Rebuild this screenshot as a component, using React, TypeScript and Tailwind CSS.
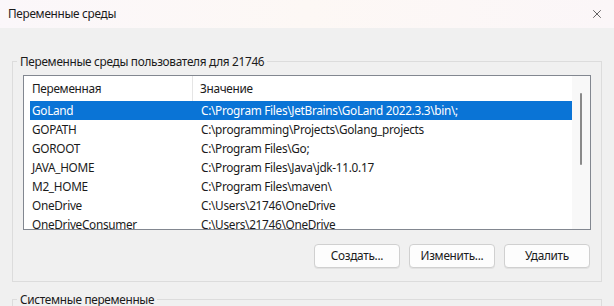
import { X } from 'lucide-react'

const ROWS = [
  ['GoLand', 'C:\\Program Files\\JetBrains\\GoLand 2022.3.3\\bin\\;'],
  ['GOPATH', 'C:\\programming\\Projects\\Golang_projects'],
  ['GOROOT', 'C:\\Program Files\\Go;'],
  ['JAVA_HOME', 'C:\\Program Files\\Java\\jdk-11.0.17'],
  ['M2_HOME', 'C:\\Program Files\\maven\\'],
  ['OneDrive', 'C:\\Users\\21746\\OneDrive'],
  ['OneDriveConsumer', 'C:\\Users\\21746\\OneDrive'],
]

const BTN = 'w-[86px] h-[24px] rounded-[4px] border border-[#d0d0d0] bg-[#fdfdfd] text-[#1b1b1b] shadow-[0_1px_0_#e2e2e2]'

export default function App() {
  return (
    <div className="w-[614px] h-[306px] overflow-hidden bg-[#f0f0f0] text-[#1b1b1b] font-['Noto_Sans',sans-serif] text-[11.8px] tracking-[-0.3px]">
      <div className="h-[28px] flex items-center justify-between pl-[8px] pr-[10px] bg-gradient-to-r from-[#fbf7fa] via-[#fdf8f5] to-[#fbf6f8]">
        <span>Переменные среды</span>
        <X size={14} strokeWidth={1.2} className="text-[#222]" />
      </div>

      <div className="px-[12px] pt-[25px]">
        <fieldset className="border border-[#dcdcdc] pl-[10px] pr-[10px] pb-[13px] pt-[6px]">
          <legend className="-ml-[6px] px-[3px] leading-[16px]">Переменные среды пользователя для 21746</legend>

          <div className="h-[155px] border border-[#828790] bg-white flex">
            <div className="flex-1 flex flex-col min-w-0">
              <div className="h-[25px] flex items-center shrink-0">
                <div className="w-[169px] h-full pl-[8px] flex items-center border-r border-[#e5e5e5]">Переменная</div>
                <div className="pl-[7px]">Значение</div>
              </div>
              <div className="flex flex-col pl-[6px] overflow-hidden">
                {ROWS.map(([name, value], i) => (
                  <div
                    key={name}
                    className={`h-[19px] shrink-0 flex items-center whitespace-nowrap ${i === 0 ? 'bg-[#0a74d6] text-white' : ''}`}
                  >
                    <div className="w-[163px] pl-[2px]">{name}</div>
                    <div className="pl-[8px]">{value}</div>
                  </div>
                ))}
              </div>
            </div>
            <div className="w-[18px] bg-[#f8f8f8] flex justify-center pt-[17px]">
              <div className="w-[2px] h-[72px] bg-[#8a8a8a] rounded-full" />
            </div>
          </div>

          <div className="flex justify-end gap-[9px] mt-[14px] pr-[1px]">
            <button className={BTN}>Создать...</button>
            <button className={BTN}>Изменить...</button>
            <button className={BTN}>Удалить</button>
          </div>
        </fieldset>

        <fieldset className="mt-[9px] border border-[#dcdcdc] pl-[10px] pr-[10px] h-[40px]">
          <legend className="-ml-[6px] px-[3px] leading-[16px]">Системные переменные</legend>
        </fieldset>
      </div>
    </div>
  )
}
